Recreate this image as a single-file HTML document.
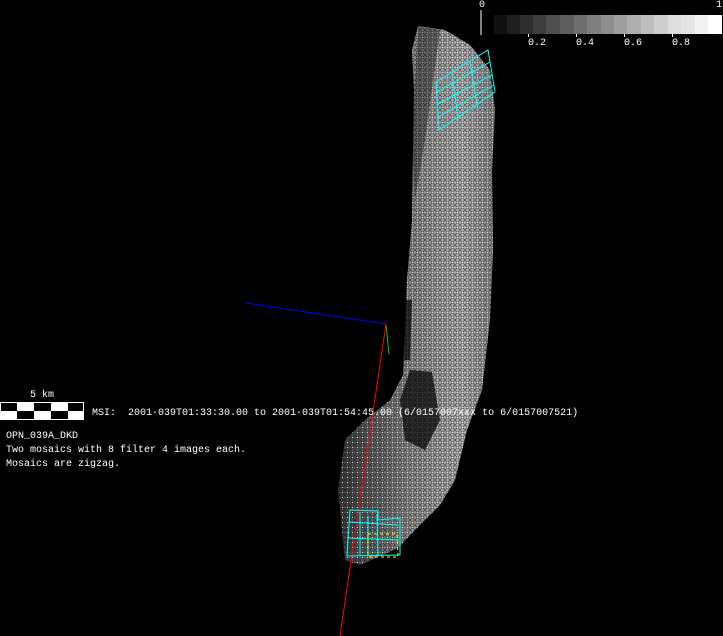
<!DOCTYPE html>
<html><head><style>
html,body{margin:0;padding:0;background:#000;width:723px;height:636px;overflow:hidden}
.t{position:absolute;color:#fff;font-family:"Liberation Mono","DejaVu Sans Mono",monospace;font-size:10px;line-height:10px;white-space:pre}
</style></head><body>
<svg width="723" height="636" style="position:absolute;left:0;top:0">
<defs>
<linearGradient id="g" x1="0" y1="0" x2="1" y2="0">
<stop offset="0" stop-color="#3a3a3a"/><stop offset="0.45" stop-color="#8a8a8a"/><stop offset="0.8" stop-color="#b0b0b0"/><stop offset="1" stop-color="#8a8a8a"/>
</linearGradient>
<pattern id="p" width="5" height="5" patternUnits="userSpaceOnUse">
<path d="M0 0L5 5M5 0L0 5" stroke="#000" stroke-width="0.7" opacity="0.55"/>
<rect x="2" y="2" width="1" height="1" fill="#ddd"/>
</pattern>
</defs>
<path d="M418 26 L445 30 L470 45 L490 70 L495 110 L492 170 L493 250 L490 320 L482 390 L467 430 L455 480 L440 505 L420 525 L398 548 L360 565 L345 560 L338 490 L345 440 L365 420 L390 400 L403 375 L405 330 L407 280 L412 220 L413 150 L414 90 L412 50 Z" fill="url(#g)"/>
<path d="M418 26 L445 30 L470 45 L490 70 L495 110 L492 170 L493 250 L490 320 L482 390 L467 430 L455 480 L440 505 L420 525 L398 548 L360 565 L345 560 L338 490 L345 440 L365 420 L390 400 L403 375 L405 330 L407 280 L412 220 L413 150 L414 90 L412 50 Z" fill="url(#p)"/>
<g fill="#000" opacity="0.7">
<path d="M410 370 L432 372 L440 420 L425 450 L405 440 L400 400 Z"/>
<path d="M405 300 L412 300 L410 360 L404 360 Z"/>
</g>
<path d="M418 26 L440 30 L425 140 L415 200 L412 140 Z" fill="#000" opacity="0.35"/>
<line x1="246" y1="303" x2="386" y2="324" stroke="#00f" stroke-width="1"/>
<line x1="386" y1="324" x2="389" y2="354" stroke="#0c0" stroke-width="1"/>
<line x1="386" y1="324" x2="340" y2="636" stroke="#f00" stroke-width="1"/>
<g stroke="#0ff" fill="none" stroke-width="1">
<path d="M436 82 L488 50 L495 92 L439 130 Z"/><path d="M437 92 L490 62 M438 104 L492 75 M438 117 L494 85"/>
<path d="M452 72 L458 120 M470 62 L478 110"/>
<path d="M350 510 L378 511 L378 520 L400 518 L400 555 L347 556 Z"/><path d="M349 522 L398 525 M348 538 L399 540 M360 512 L360 555 M377 514 L378 555 M368 516 L368 556"/>
</g>
<path d="M368 534 L397 534 L398 557 L368 557 Z" fill="none" stroke="#ff0" stroke-dasharray="3 3"/>
<!-- colorbar -->
<line x1="481" y1="10" x2="481" y2="35" stroke="#fff"/>
<g>
<rect x="494" y="15" width="14" height="19" fill="#111"/><rect x="507" y="15" width="14" height="19" fill="#1e1e1e"/>
<rect x="520" y="15" width="14" height="19" fill="#2e2e2e"/><rect x="533" y="15" width="14" height="19" fill="#3e3e3e"/>
<rect x="546" y="15" width="14" height="19" fill="#4e4e4e"/><rect x="560" y="15" width="14" height="19" fill="#5e5e5e"/>
<rect x="574" y="15" width="14" height="19" fill="#6e6e6e"/><rect x="587" y="15" width="14" height="19" fill="#7e7e7e"/>
<rect x="601" y="15" width="14" height="19" fill="#8e8e8e"/><rect x="614" y="15" width="14" height="19" fill="#9e9e9e"/>
<rect x="627" y="15" width="14" height="19" fill="#aeaeae"/><rect x="641" y="15" width="14" height="19" fill="#bdbdbd"/>
<rect x="654" y="15" width="14" height="19" fill="#cdcdcd"/><rect x="668" y="15" width="14" height="19" fill="#dddddd"/>
<rect x="681" y="15" width="14" height="19" fill="#e6e6e6"/><rect x="695" y="15" width="14" height="19" fill="#f2f2f2"/>
<rect x="708" y="15" width="14" height="19" fill="#fff"/>
</g>
<g stroke="#fff"><line x1="528.5" y1="34" x2="528.5" y2="37"/><line x1="576.5" y1="34" x2="576.5" y2="37"/><line x1="624.5" y1="34" x2="624.5" y2="37"/><line x1="672.5" y1="34" x2="672.5" y2="37"/></g>
<!-- scale bar -->
<rect x="0" y="402" width="84" height="18" fill="#fff"/>
<g fill="#000">
<rect x="1" y="403" width="16" height="8"/><rect x="34" y="403" width="17" height="8"/><rect x="68" y="403" width="15" height="8"/>
<rect x="17" y="411" width="17" height="8"/><rect x="51" y="411" width="17" height="8"/>
</g>
</svg>
<div class="t" style="left:479px;top:1px">0</div>
<div class="t" style="left:716px;top:1px">1</div>
<div class="t" style="left:528px;top:39px">0.2</div>
<div class="t" style="left:576px;top:39px">0.4</div>
<div class="t" style="left:624px;top:39px">0.6</div>
<div class="t" style="left:672px;top:39px">0.8</div>
<div class="t" style="left:30px;top:391px">5 km</div>
<div class="t" style="left:92px;top:409px">MSI:  2001-039T01:33:30.00 to 2001-039T01:54:45.00 (6/0157007xxx to 6/0157007521)</div>
<div class="t" style="left:6px;top:432px">OPN_039A_DKD</div>
<div class="t" style="left:6px;top:446px">Two mosaics with 8 filter 4 images each.</div>
<div class="t" style="left:6px;top:460px">Mosaics are zigzag.</div>
</body></html>
